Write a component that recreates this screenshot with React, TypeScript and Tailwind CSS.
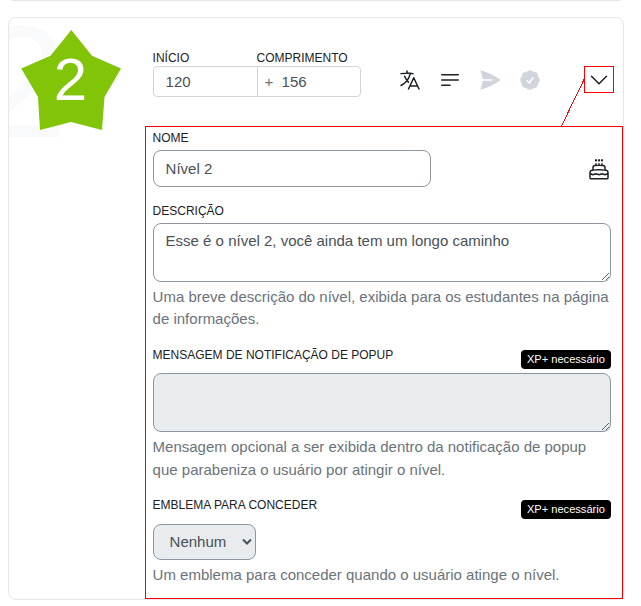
import React from "react";
import {
  HiOutlineLanguage,
  HiOutlineBars3BottomLeft,
  HiPaperAirplane,
  HiCheckBadge,
  HiOutlineChevronDown,
  HiOutlineCake,
} from "react-icons/hi2";

function Label({ children }: { children: React.ReactNode }) {
  return <div className="text-[12px] leading-4 whitespace-nowrap text-[#1d2125]">{children}</div>;
}

function Help({ children }: { children: React.ReactNode }) {
  return <p className="text-[15px] leading-[22.5px] text-[#6a737b]">{children}</p>;
}

function Tag() {
  return (
    <span className="h-[19px] w-[90px] rounded-[4px] bg-black pl-[6.3px] text-[11.1px] leading-[19px] whitespace-nowrap text-white">
      XP+ necessário
    </span>
  );
}

function StarBadge() {
  return (
    <div className="relative h-[120px] w-[143.6px] shrink-0">
      <span className="absolute top-[-28px] left-[-32px] text-[160px] leading-[184px] text-[#f9fafb]">2</span>
      <svg className="absolute top-[12px] left-[12px]" width="101" height="101" viewBox="0 0 101 101">
        <polygon points="50.3,0 71,25.7 100,38.5 83.5,67 81,100 50,92 19,100 17,67 0.3,38.5 29.5,25.7" fill="#81c408" />
      </svg>
      <span className="absolute top-[27px] left-[12px] w-[99px] text-center text-[60px] leading-[69px] text-white">2</span>
    </div>
  );
}

export default function App() {
  return (
    <div
      className="relative h-[606px] w-[641px] overflow-hidden bg-white"
      style={{ fontFamily: '"Liberation Sans", Arial, sans-serif' }}
    >
      <div className="ml-2 h-px w-[616px] px-1">
        <div className="h-px bg-[#e5e7eb]" />
      </div>
      <section className="mt-4 ml-2 flex h-[583px] w-[616px] overflow-hidden rounded-lg border border-[#e5e7eb]">
        <StarBadge />
        <div className="w-[458px]">
          <div className="flex h-[108px] pt-8">
            <div className="w-[208px] shrink-0">
              <div className="flex">
                <div className="w-[104px]"><Label>INÍCIO</Label></div>
                <Label>COMPRIMENTO</Label>
              </div>
              <div className="flex h-[31px] rounded-[4px] border border-[#d1d5db] text-[15px] leading-[29px] text-[#495057]">
                <div className="w-[104px] border-r border-[#d1d5db] pl-3">120</div>
                <div className="flex pl-[7px]">
                  <span className="w-[17px] text-[#6a737b]">+</span>
                  <span>156</span>
                </div>
              </div>
            </div>
            <div className="flex flex-1 pt-[18px] pl-[37px] text-[#1d2125]">
              <HiOutlineLanguage className="h-6 w-6" />
              <HiOutlineBars3BottomLeft className="ml-4 h-6 w-6" />
              <HiPaperAirplane className="ml-4 h-6 w-6 text-[#d1d5db]" />
              <HiCheckBadge className="ml-4 h-6 w-6 text-[#d1d5db]" />
              <HiOutlineChevronDown className="mr-0 ml-auto h-6 w-6" />
            </div>
          </div>

          <div className="pt-[4px]"><Label>NOME</Label></div>
          <div className="mt-[4px] flex items-center justify-between">
            <div className="h-[37px] w-[278px] rounded-lg border border-[#8f959e] px-3 text-[15px] leading-[35px] text-[#495057]">
              Nível 2
            </div>
            <HiOutlineCake className="h-6 w-6 text-[#1d2125]" />
          </div>

          <div className="mt-4"><Label>DESCRIÇÃO</Label></div>
          <textarea
            className="mt-1 block h-[59px] w-full resize rounded-lg border border-[#8f959e] px-3 py-[6px] text-[15px] leading-[22.5px] text-[#495057]"
            defaultValue="Esse é o nível 2, você ainda tem um longo caminho"
          />
          <div className="mt-[3.7px] mb-[16.3px]">
            <Help>Uma breve descrição do nível, exibida para os estudantes na página de informações.</Help>
          </div>

          <div className="flex h-[26px] items-start justify-between">
            <Label>MENSAGEM DE NOTIFICAÇÃO DE POPUP</Label>
            <div className="flex pt-[3px]"><Tag /></div>
          </div>
          <textarea
            disabled
            className="block h-[59px] w-full resize rounded-lg border border-[#8f959e] bg-[#e9ecef]"
          />
          <div className="mt-[4.2px] mb-[15.8px]">
            <Help>Mensagem opcional a ser exibida dentro da notificação de popup que parabeniza o usuário por atingir o nível.</Help>
          </div>

          <div className="flex h-[27px] items-start justify-between">
            <Label>EMBLEMA PARA CONCEDER</Label>
            <div className="flex pt-[3px]"><Tag /></div>
          </div>
          <div className="flex h-9 w-[103px] items-center justify-between rounded-lg border border-[#8f959e] bg-[#e9ecef] pr-[3px] pl-4 text-[15px] text-[#495057]">
            Nenhum
            <svg width="10" height="8" viewBox="0 0 10 8" fill="none" stroke="#495057" strokeWidth="2">
              <path d="M1 1.5 5 5.5 9 1.5" />
            </svg>
          </div>
          <div className="mt-[4px]">
            <Help>Um emblema para conceder quando o usuário atinge o nível.</Help>
          </div>
        </div>
      </section>

      <svg className="pointer-events-none absolute inset-0" width="641" height="606" fill="none" stroke="#ff0000" shapeRendering="crispEdges">
        <rect x="145.5" y="126.5" width="477" height="472" />
        <rect x="584.5" y="66.5" width="29" height="26" />
        <path d="M584 79.5 561.5 126" />
      </svg>
    </div>
  );
}
